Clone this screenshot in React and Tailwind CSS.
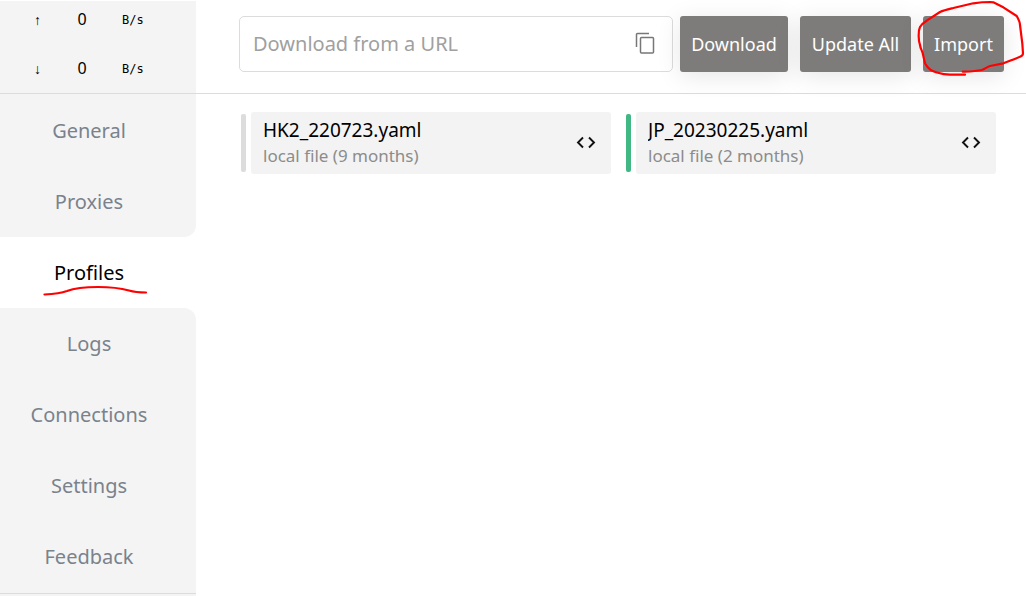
import { useState } from 'react'

const SPEEDS = [
  { id: 'up', arrow: '↑', value: 0 },
  { id: 'down', arrow: '↓', value: 0 },
]

const NAV_ITEMS = ['General', 'Proxies', 'Profiles', 'Logs', 'Connections', 'Settings', 'Feedback']

const PROFILES = [
  { name: 'HK2_220723.yaml', info: 'local file (9 months)' },
  { name: 'JP_20230225.yaml', info: 'local file (2 months)' },
]

export default function App() {
  const [page, setPage] = useState('Profiles')
  const [selected, setSelected] = useState('JP_20230225.yaml')
  const [url, setUrl] = useState('')

  return (
    <div className="flex min-h-screen flex-col overflow-hidden bg-white font-['Noto_Sans','Open_Sans',sans-serif] text-black">
      <header className="flex border-b border-[#dcdcdc]">
        <Traffic />
        <div className="flex min-w-0 flex-1 items-center pt-4 pr-[22px] pb-[21px] pl-[43px]">
          <div className="mr-[7px] flex h-14 min-w-0 flex-1 items-center rounded-[5px] border border-[#dcdcdc] pr-[15px] pl-[13px]">
            <input
              type="text"
              aria-label="Download from a URL"
              placeholder="Download from a URL"
              value={url}
              onChange={(e) => setUrl(e.target.value)}
              className="min-w-0 flex-1 text-xl outline-none placeholder:text-[#a0a0a0]"
            />
            <button type="button" aria-label="Paste">
              <CopyIcon />
            </button>
          </div>
          <div className="flex gap-3">
            <ToolButton className="w-[108px]">Download</ToolButton>
            <ToolButton className="w-[111px]">Update All</ToolButton>
            <div className="relative">
              <ToolButton className="w-[81px]">Import</ToolButton>
              <CircleMark />
            </div>
          </div>
        </div>
      </header>

      <div className="flex flex-1">
        <Sidebar page={page} onChange={setPage} />
        <main className="min-w-0 flex-1 pt-[18px] pr-[30px] pl-[45px]">
          <div className="grid grid-cols-2 gap-[15px]">
            {PROFILES.map((profile) => (
              <ProfileCard
                key={profile.name}
                profile={profile}
                active={profile.name === selected}
                onSelect={() => setSelected(profile.name)}
              />
            ))}
          </div>
        </main>
      </div>
    </div>
  )
}

function Traffic() {
  return (
    <div className="mt-px w-[196px] shrink-0 bg-[#f4f4f4]">
      {SPEEDS.map((speed) => (
        <div key={speed.id} className="mb-[13px] flex h-9 items-center pl-[30px] last:mb-0">
          <span className="w-[15px] pt-0.5 text-center font-['Liberation_Sans',sans-serif] text-sm">{speed.arrow}</span>
          <span className="w-[74px] text-center text-base">{speed.value}</span>
          <span className="pt-0.5 pl-[3px] font-['DejaVu_Sans_Mono',monospace] text-xs">B/s</span>
        </div>
      ))}
    </div>
  )
}

function Sidebar({ page, onChange }) {
  const current = NAV_ITEMS.indexOf(page)

  return (
    <nav className="flex w-[196px] shrink-0 flex-col bg-[#f4f4f4]">
      <div className="h-px" />
      {NAV_ITEMS.map((item, i) => (
        <div key={item} className="bg-white">
          <button
            type="button"
            onClick={() => onChange(item)}
            className={`relative flex h-[71px] w-full items-center justify-center pr-[18px] text-xl ${
              i === current ? 'bg-white text-black' : 'bg-[#f4f4f4] text-[#7a828c]'
            } ${i === current - 1 ? 'rounded-br-xl' : ''} ${i === current + 1 ? 'rounded-tr-xl' : ''}`}
          >
            {item}
            {i === current && <UnderlineMark />}
          </button>
        </div>
      ))}
      <div className="mt-px border-t border-[#dcdcdc]" />
    </nav>
  )
}

function ToolButton({ className, children }) {
  return (
    <button
      type="button"
      className={`h-14 rounded-[3px] bg-[#7e7c7a] text-lg whitespace-nowrap text-white shadow-[0_4px_24px_rgba(0,0,0,0.1)] ${className}`}
    >
      {children}
    </button>
  )
}

function ProfileCard({ profile, active, onSelect }) {
  return (
    <div className="flex items-center gap-[5px]">
      <div className={`h-[58px] w-[5px] rounded-xs ${active ? 'bg-[#41b883]' : 'bg-[#dcdcdc]'}`} />
      <div className="flex h-[62px] min-w-0 flex-1 items-center justify-between rounded-[3px] bg-[#f3f3f3] pr-[15px] pl-3">
        <button type="button" onClick={onSelect} className="min-w-0 flex-1 text-left">
          <div className="truncate text-[19px] leading-[26px]">{profile.name}</div>
          <div className="truncate text-[17px] leading-[26px] text-[#8c8c8c]">{profile.info}</div>
        </button>
        <button type="button" aria-label={`Edit ${profile.name}`}>
          <CodeIcon />
        </button>
      </div>
    </div>
  )
}

function CopyIcon() {
  return (
    <svg width="22" height="26" viewBox="0 0 22 26" fill="none" stroke="#777" strokeWidth="1.5">
      <path d="M1.5 16V3.5a1 1 0 0 1 1-1H14" />
      <rect x="5.5" y="6.5" width="13" height="15.500" rx="1" />
    </svg>
  )
}

function CodeIcon() {
  return (
    <svg width="20" height="14" viewBox="0 0 20 14" fill="none" stroke="#111" strokeWidth="1.9">
      <path d="M7 1.500 2 6.500l5 5M13 1.500l5 5-5 5" />
    </svg>
  )
}

// Hand-drawn red markers
function UnderlineMark() {
  return (
    <svg className="pointer-events-none absolute top-[46px] left-10" width="112" height="16" fill="none">
      <path
        d="M4.500 11.500C13 11 20 10.500 27 8C36 4.500 46 4 58 4C70 4 80 5 89 7.500C94 9 99 9.500 106 9.500"
        stroke="#f00"
        strokeWidth="2.200"
        strokeLinecap="round"
      />
    </svg>
  )
}

function CircleMark() {
  return (
    <svg className="pointer-events-none absolute -top-4 -left-2" width="111" height="80" fill="none">
      <path
        d="M50 74.700H35C31 74.500 27 74 24 73C20 72 17 71 15 69.300C12 67 11 65 10 63.300L7.700 53.300C7 50 5.500 49 5 45C3.500 41 3.700 38 3.700 35C3.700 31 4 29 5 27C6 25 8 23 11.700 20.700L25 12C29 10 34 9 38.300 8L58.300 3.300C64 2.500 70 2 75 2L78.300 2.300L88.300 7.300L101.700 16C104 20 105 22 105 25L107.300 43.300L108 53.300C108 55 107 56 105 56.700C100 59 94 61 88.300 63.300L75 66C71 67.500 70 69 66.700 70C60 71.500 54 71.500 47.700 71.700"
        stroke="#f00"
        strokeWidth="2.200"
        strokeLinecap="round"
        strokeLinejoin="round"
      />
    </svg>
  )
}
